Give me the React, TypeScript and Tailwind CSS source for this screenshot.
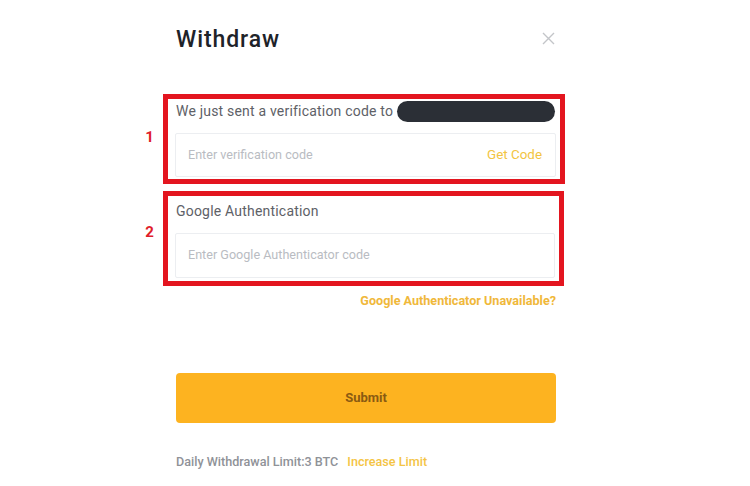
import { FC } from "react";

const Field: FC<{ placeholder: string; action?: string; className?: string }> = ({
    placeholder,
    action,
    className,
}) => (
    <div
        className={`flex items-center justify-between border border-[#eceef1] rounded-[2px] pl-[12px] pr-[13px] ${className ?? ""}`}
    >
        <span className="text-[12.6px] text-[#b9bcc2]">{placeholder}</span>
        {action && <span className="text-[13.4px] text-[#f2c442]">{action}</span>}
    </div>
);

const App: FC = () => {
    return (
        <div
            className="w-[750px] h-[486px] bg-white overflow-hidden"
            style={{ fontFamily: "Roboto, 'Noto Sans', sans-serif" }}
        >
            <div className="ml-[136px] w-[430px] pt-[26px]">
                {/* header */}
                <div className="flex items-center justify-between pl-[40px] pr-[11px] h-[28px]">
                    <span className="text-[23px] font-medium text-[#1e2329] tracking-[0.9px]">Withdraw</span>
                    <svg width="13" height="13" viewBox="0 0 13 13" className="-mt-[4px]">
                        <path d="M1 1 L12 12 M12 1 L1 12" stroke="#c3c5c9" strokeWidth="1.4" />
                    </svg>
                </div>

                {/* step 1 */}
                <div className="flex items-start mt-[40px]">
                    <div className="w-[27px] text-center text-[15px] font-bold text-[#e0202a] mt-[32px]">1</div>
                    <div className="w-[402px] h-[90px] border-[5px] border-[#e3151f] pl-[7px] pr-[4px]">
                        <div className="flex items-center justify-between h-[24px] pl-[1px] pr-[1px]">
                            <span className="text-[14px] text-[#5e6167] tracking-[0.2px]">We just sent a verification code to</span>
                            <span className="block w-[158px] h-[21px] rounded-full bg-[#2b2f36]" />
                        </div>
                        <Field
                            placeholder="Enter verification code"
                            action="Get Code"
                            className="h-[44px] mt-[10px]"
                        />
                    </div>
                </div>

                {/* step 2 */}
                <div className="flex items-start mt-[7px]">
                    <div className="w-[27px] text-center text-[15px] font-bold text-[#e0202a] mt-[30px]">2</div>
                    <div className="w-[401px] h-[95px] border-[5px] border-[#e3151f] pl-[7px] pr-[4px]">
                        <div className="flex items-center h-[22px] mt-[4px] pl-[1px]">
                            <span className="text-[14px] text-[#5e6167] tracking-[0.2px]">Google Authentication</span>
                        </div>
                        <Field placeholder="Enter Google Authenticator code" className="h-[45px] mt-[11px]" />
                    </div>
                </div>

                <div className="flex justify-end pr-[10px] mt-[6px]">
                    <span className="text-[12.6px] font-bold text-[#f0b83a]">Google Authenticator Unavailable?</span>
                </div>

                {/* submit */}
                <div className="pl-[40px] pr-[10px] mt-[62px]">
                    <button className="w-full h-[50px] rounded-[4px] bg-[#fdb320] text-[13px] font-bold text-[#8a5a12]">
                        Submit
                    </button>
                </div>

                <div className="flex items-center gap-[9px] pl-[40px] mt-[30px] text-[12.6px] font-medium">
                    <span className="text-[#8f9298]">Daily Withdrawal Limit:3 BTC</span>
                    <span className="text-[#f4c445]">Increase Limit</span>
                </div>
            </div>
        </div>
    );
};

export default App;
